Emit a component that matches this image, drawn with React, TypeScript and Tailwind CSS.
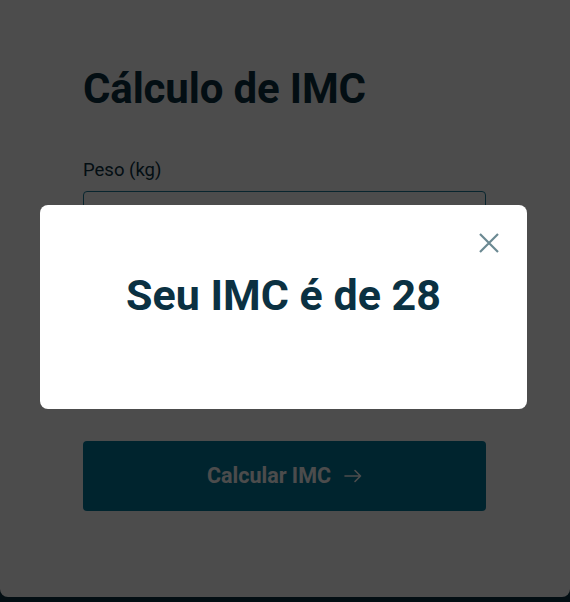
import { useState } from 'react';

const CloseIcon = () => (
  <svg width="20" height="20" viewBox="0 0 20 20" fill="none" stroke="currentColor" strokeWidth="2.2" strokeLinecap="butt">
    <path d="M1 1 L19 19 M19 1 L1 19" />
  </svg>
);

const ArrowIcon = () => (
  <svg width="18" height="14" viewBox="0 0 18 14" fill="none" stroke="currentColor" strokeWidth="1.6" strokeLinecap="round" strokeLinejoin="round">
    <path d="M1 7 H16.5 M11 1.5 L16.5 7 L11 12.5" />
  </svg>
);

export default function App() {
  const [peso, setPeso] = useState('');
  const [altura, setAltura] = useState('');
  const [open, setOpen] = useState(true);

  return (
    <div className="min-h-screen bg-[#0b3142] font-['Roboto',sans-serif]">
      <div className="h-[597px] bg-white rounded-b-lg pl-[83px] pr-[84px] pt-16">
        <h1 className="text-[42px] leading-[50px] font-bold tracking-[-0.15px] text-[#0b3142]">Cálculo de IMC</h1>

        <form className="mt-11" onSubmit={(e) => e.preventDefault()}>
          <label htmlFor="peso" className="block text-[18.5px] leading-6 text-[#0b3142] mb-[9px]">
            Peso (kg)
          </label>
          <input
            id="peso"
            type="text"
            value={peso}
            onChange={(e) => setPeso(e.target.value)}
            className="w-full h-12 px-4 border border-[#1d7e9c] rounded text-base text-[#0b3142] focus:outline-none"
          />

          <label htmlFor="altura" className="block text-[18.5px] leading-6 text-[#0b3142] mt-6 mb-[9px]">
            Altura (m)
          </label>
          <input
            id="altura"
            type="text"
            value={altura}
            onChange={(e) => setAltura(e.target.value)}
            className="w-full h-12 px-4 border border-[#1d7e9c] rounded text-base text-[#0b3142] focus:outline-none"
          />

          <button
            type="submit"
            onClick={() => setOpen(true)}
            className="mt-[97px] w-full h-[70px] bg-[#00789c] rounded flex items-center justify-center gap-[13px] text-white text-[21.5px] font-bold"
          >
            Calcular IMC
            <ArrowIcon />
          </button>
        </form>
      </div>

      {open && (
        <div className="fixed inset-0 bg-black/70 flex items-start pt-[205px] pl-10">
          <div className="relative w-[487px] h-[204px] bg-white rounded-lg pt-[65px] text-center">
            <button
              onClick={() => setOpen(false)}
              className="absolute top-[28px] right-[28px] text-[#6b8992]"
              aria-label="Fechar"
            >
              <CloseIcon />
            </button>
            <p className="text-[43px] leading-[50px] font-bold text-[#0b3142]">Seu IMC é de 28</p>
          </div>
        </div>
      )}
    </div>
  );
}
